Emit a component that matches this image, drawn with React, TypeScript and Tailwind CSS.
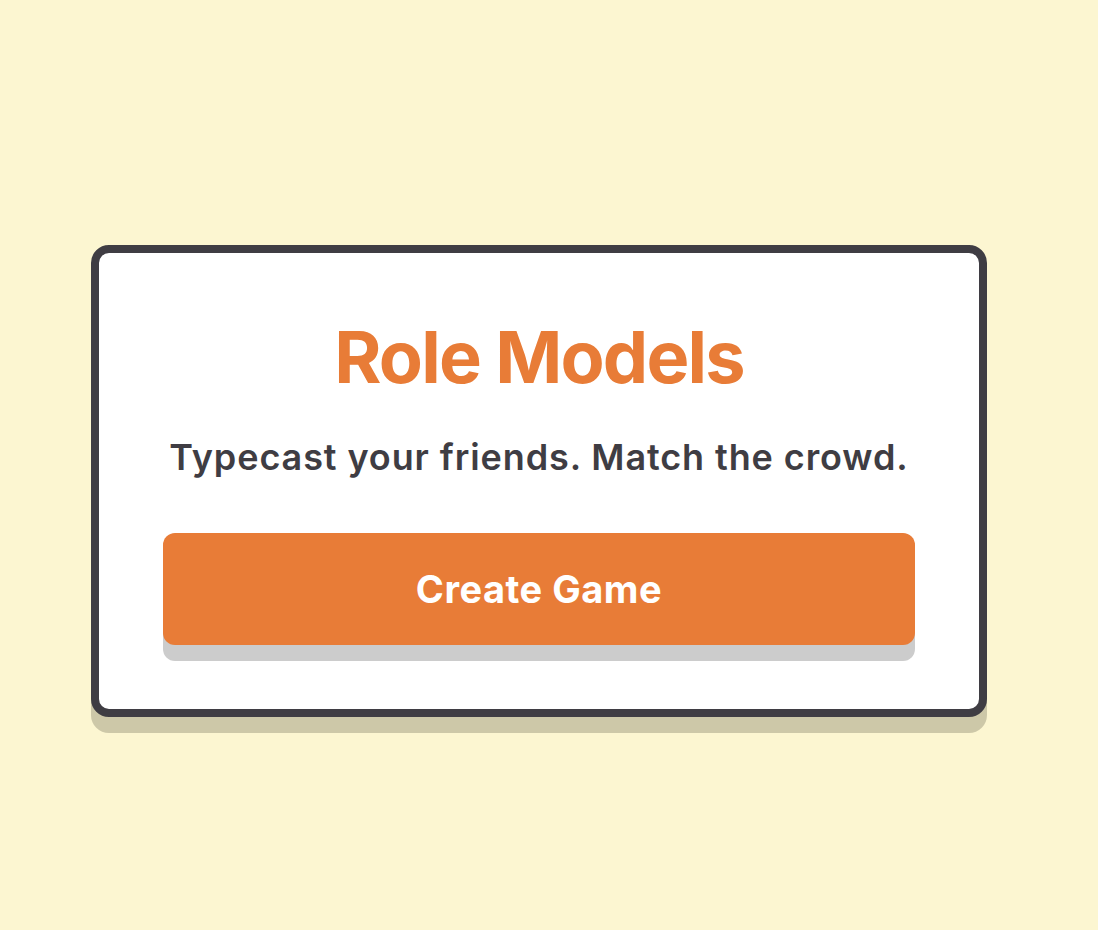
export default function App() {
  return (
    <div
      className="min-h-screen w-full bg-[#fcf6d1] pt-[245px] pl-[91px]"
      style={{ fontFamily: "Inter, 'Noto Sans', sans-serif" }}
    >
      <div className="w-[896px] h-[472px] rounded-[18px] border-8 border-[#3f3d43] bg-white shadow-[0_16px_0_#cdc8a8] px-16 pt-[68px] pb-16 flex flex-col items-center">
        <h1 className="text-[72px] leading-[72px] font-bold text-[#e87c37] tracking-[-1.8px]">
          Role Models
        </h1>
        <p className="mt-[44px] text-[36px] leading-[40px] font-semibold text-[#3f3d43] tracking-[0.9px]">
          Typecast your friends. Match the crowd.
        </p>
        <button className="mt-auto w-full h-[112px] rounded-[12px] bg-[#e87c37] text-white text-[38px] font-bold tracking-[0.5px] shadow-[0_16px_0_#cccccc]">
          Create Game
        </button>
      </div>
    </div>
  );
}
